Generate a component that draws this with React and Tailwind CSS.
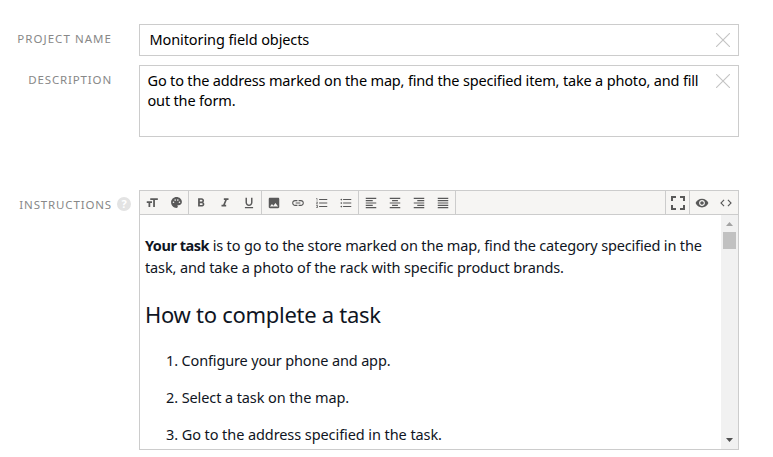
import {
  MdFormatSize, MdPalette, MdFormatBold, MdFormatItalic, MdFormatUnderlined,
  MdImage, MdLink, MdFormatListNumbered, MdFormatListBulleted,
  MdFormatAlignLeft, MdFormatAlignCenter, MdFormatAlignRight, MdFormatAlignJustify,
  MdFullscreen, MdVisibility, MdCode,
} from "react-icons/md";

const groups = [
  [MdFormatSize, MdPalette],
  [MdFormatBold, MdFormatItalic, MdFormatUnderlined],
  [MdImage, MdLink, MdFormatListNumbered, MdFormatListBulleted],
  [MdFormatAlignLeft, MdFormatAlignCenter, MdFormatAlignRight, MdFormatAlignJustify],
];

function ToolButton({ icon: Icon, size = 14 }) {
  return (
    <button className="flex h-full w-6 items-center justify-center">
      <Icon size={size} />
    </button>
  );
}

function Label({ children, className }) {
  return (
    <div className={`flex w-[139px] shrink-0 justify-end text-[11.5px] leading-4 text-[#888] ${className}`}>
      {children}
    </div>
  );
}

function ClearIcon() {
  return (
    <svg className="h-[14px] w-[14px] shrink-0" viewBox="0 0 14 14" fill="none" stroke="#c4c4c4" strokeWidth="1.1">
      <path d="M0 0L14 14M14 0L0 14" />
    </svg>
  );
}

export default function App() {
  return (
    <div className="h-[457px] w-[773px] overflow-hidden bg-white pt-6 font-['Noto_Sans',sans-serif] text-[14.5px] text-black">
      <div className="flex">
        <Label className="pt-[7px] pr-[27px]"><span className="tracking-[1.05px]">PROJECT NAME</span></Label>
        <div className="flex h-8 w-[600px] items-center justify-between border border-[#ccc] pr-2 pl-[9.5px]">
          <span className="tracking-[-0.1px]">Monitoring field objects</span>
          <ClearIcon />
        </div>
      </div>

      <div className="mt-[9px] flex">
        <Label className="pt-[7px] pr-[27px]"><span className="tracking-[0.85px]">DESCRIPTION</span></Label>
        <div className="flex h-[72px] w-[600px] items-start justify-between border border-[#ccc] pt-1 pr-2 pl-[7.5px] leading-5">
          <div className="whitespace-nowrap">
            <div className="tracking-[-0.17px]">Go to the address marked on the map, find the specified item, take a photo, and fill</div>
            <div className="tracking-[-0.17px]">out the form.</div>
          </div>
          <div className="pt-1"><ClearIcon /></div>
        </div>
      </div>

      <div className="mt-[53px] flex">
        <Label className="gap-[5px] pt-[7px] pr-2">
          <span className="tracking-[0.85px]">INSTRUCTIONS</span>
          <span className="flex h-[14px] w-[14px] items-center justify-center rounded-full bg-[#e3e3e3] text-[11px] font-bold text-white">?</span>
        </Label>
        <div className="flex h-[260px] w-[600px] flex-col border border-[#ccc]">
          <div className="flex h-6 shrink-0 justify-between border-b border-[#ccc] bg-[#f6f5f3] text-[#595959]">
            <div className="flex">
              {groups.map((icons, i) => (
                <div key={i} className="flex border-r border-[#ccc]">
                  {icons.map((icon, j) => <ToolButton key={j} icon={icon} size={icon === MdPalette ? 13 : 14} />)}
                </div>
              ))}
            </div>
            <div className="flex">
              <div className="flex w-[25px] justify-center border-x border-[#ccc]">
                <ToolButton icon={MdFullscreen} size={24} />
              </div>
              <ToolButton icon={MdVisibility} />
              <ToolButton icon={MdCode} />
            </div>
          </div>
          <div className="flex min-h-0 flex-1">
            <div className="flex-1 overflow-hidden pt-[19px] pl-[5px] leading-[22px] whitespace-nowrap text-[#0f1523]">
              <p className="tracking-[-0.165px]"><b className="tracking-[-0.48px]">Your task</b> is to go to the store marked on the map, find the category specified in the</p>
              <p className="tracking-[-0.125px]">task, and take a photo of the rack with specific product brands.</p>
              <h2 className="mt-[20px] text-[22px] leading-[32px] tracking-[-0.28px]">How to complete a task</h2>
              <ol className="mt-[19px] flex flex-col gap-[15px] pl-[21px]">
                <li className="tracking-[-0.15px]">1. Configure your phone and app.</li>
                <li className="tracking-[-0.1px]">2. Select a task on the map.</li>
                <li className="tracking-[-0.08px]">3. Go to the address specified in the task.</li>
              </ol>
            </div>
            <div className="flex w-[17px] shrink-0 flex-col items-center bg-[#f1f1f1]">
              <svg className="h-[17px] w-[17px] shrink-0" viewBox="0 0 17 17"><path d="M5 11h7L8.500 7z" fill="#a3a3a3" /></svg>
              <div className="h-[17px] w-[13px] bg-[#c1c1c1]" />
              <svg className="mt-auto h-[17px] w-[17px] shrink-0" viewBox="0 0 17 17"><path d="M5 6h7L8.500 10z" fill="#505050" /></svg>
            </div>
          </div>
        </div>
      </div>
    </div>
  );
}
